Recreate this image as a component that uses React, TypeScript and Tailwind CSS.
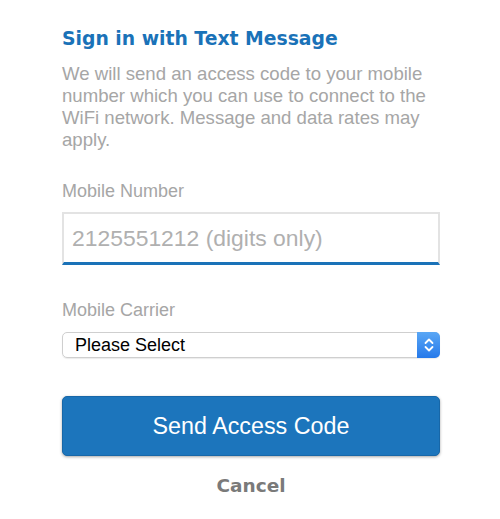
import React from "react";

export default function App() {
  return (
    <div className="w-[500px] h-[519px] bg-white" style={{ fontFamily: '"Liberation Sans", Arial, sans-serif' }}>
      <div className="ml-[62px] w-[378px] pt-[27px] flex flex-col">
        <h1 className="text-[18.8px] leading-[24px] font-bold text-[#1a72b8]" style={{ fontFamily: '"DejaVu Sans", Verdana, sans-serif' }}>
          Sign in with Text Message
        </h1>
        <p className="mt-[12px] text-[18.6px] leading-[22px] text-[#a6a6a6]">
          We will send an access code to your mobile number which you can use to connect to the WiFi network. Message and data rates may apply.
        </p>
        <label className="mt-[30px] text-[18px] leading-[20px] text-[#a6a6a6]">Mobile Number</label>
        <div className="mt-[11px] h-[53px] border-2 border-[#e3e3e3] border-b-[3px] border-b-[#1a72b8] flex items-center pl-[8px]">
          <span className="text-[22.9px] text-[#b0b0b0]">2125551212 (digits only)</span>
        </div>
        <label className="mt-[35px] text-[18px] leading-[20px] text-[#a6a6a6]">Mobile Carrier</label>
        <div className="mt-[12px] h-[26px] rounded-[5px] border border-[#cfcfcf] flex items-center justify-between shadow-[0_1px_1px_rgba(0,0,0,0.08)]">
          <span className="pl-[12px] text-[18px] text-black">Please Select</span>
          <div className="w-[23px] h-[26px] -mr-px rounded-r-[5px] bg-gradient-to-b from-[#5aa7f5] to-[#2579ea] flex items-center justify-center">
            <svg width="10" height="18" viewBox="0 0 10 18" fill="none" stroke="white" strokeWidth="1.8" strokeLinecap="round" strokeLinejoin="round">
              <path d="M1.5 7 L5 3.5 L8.5 7" />
              <path d="M1.5 11 L5 14.5 L8.5 11" />
            </svg>
          </div>
        </div>
        <button className="mt-[38px] h-[60px] rounded-[5px] bg-[#1c75bc] text-white text-[23.3px] shadow-[0_1px_3px_rgba(0,0,0,0.35)] border border-[#1767a8]">
          Send Access Code
        </button>
        <div className="mt-[16px] text-center text-[18.5px] font-bold text-[#7a7a7a]" style={{ fontFamily: '"DejaVu Sans", Verdana, sans-serif' }}>
          Cancel
        </div>
      </div>
    </div>
  );
}
